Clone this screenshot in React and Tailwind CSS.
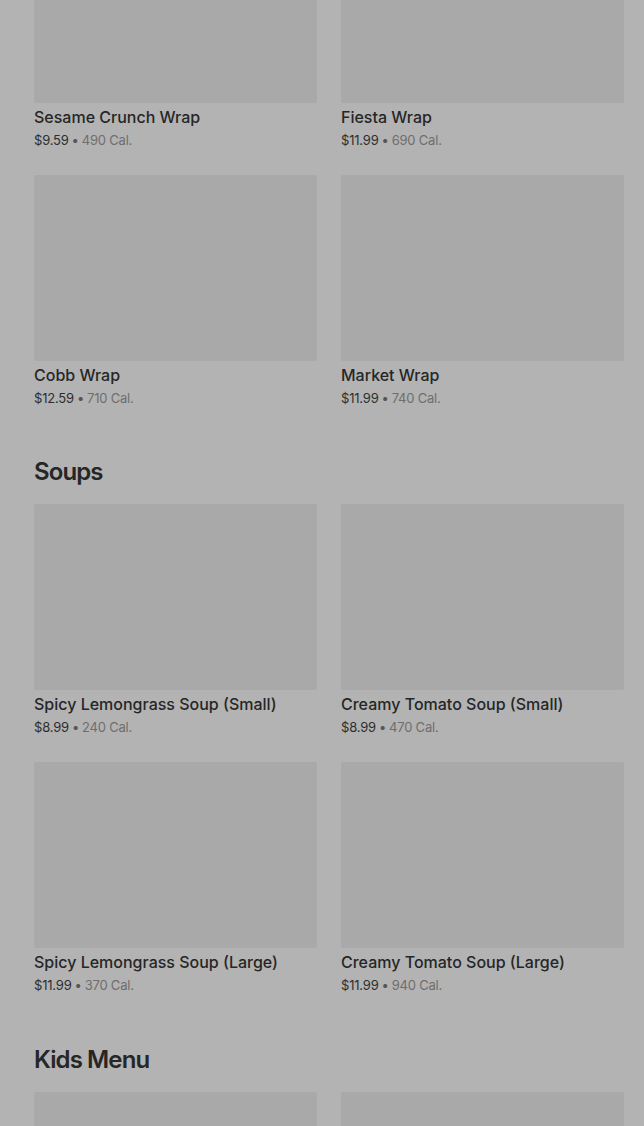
import React from 'react';

const sections = [
  {
    title: null,
    items: [
      { name: 'Sesame Crunch Wrap', price: '$9.59', cal: '490 Cal.' },
      { name: 'Fiesta Wrap', price: '$11.99', cal: '690 Cal.' },
      { name: 'Cobb Wrap', price: '$12.59', cal: '710 Cal.' },
      { name: 'Market Wrap', price: '$11.99', cal: '740 Cal.' },
    ],
  },
  {
    title: 'Soups',
    gap: 'mt-[48px]',
    items: [
      { name: 'Spicy Lemongrass Soup (Small)', price: '$8.99', cal: '240 Cal.' },
      { name: 'Creamy Tomato Soup (Small)', price: '$8.99', cal: '470 Cal.' },
      { name: 'Spicy Lemongrass Soup (Large)', price: '$11.99', cal: '370 Cal.' },
      { name: 'Creamy Tomato Soup (Large)', price: '$11.99', cal: '940 Cal.' },
    ],
  },
  {
    title: 'Kids Menu',
    gap: 'mt-[49px]',
    // below the fold: only the photos peek in
    items: [{ name: 'kids-1' }, { name: 'kids-2' }],
  },
];

const MenuItem = ({ item }) => (
  <div className="flex flex-col">
    <div className="h-[186px] bg-[#a9a9a9] rounded-[2px]" />
    {item.price && (
      <>
        <h3 className="mt-[4px] text-[16px] leading-5 font-medium text-[#262626]">{item.name}</h3>
        <p className="mt-[3px] text-[13px] leading-5 tracking-[-0.2px] text-[#2e2e2e]">
          {item.price}
          <span className="text-[#555] mx-[3px]">•</span>
          <span className="text-[#6e6e6e]">{item.cal}</span>
        </p>
      </>
    )}
  </div>
);

export default function App() {
  return (
    <div className="h-[1126px] overflow-hidden bg-[#b3b3b3]" style={{ fontFamily: 'Inter, "Open Sans", sans-serif' }}>
      <div className="-mt-[83px] pl-[34px] pr-[20px]">
        {sections.map((s, i) => (
          <section key={i} className={s.gap || ''}>
            {s.title && (
              <h2 className="text-[24px] leading-8 font-semibold tracking-[-0.9px] text-[#262626] mb-[16px]">{s.title}</h2>
            )}
            <div className="grid grid-cols-2 gap-x-[24px] gap-y-[25px]">
              {s.items.map((item) => (
                <MenuItem key={item.name} item={item} />
              ))}
            </div>
          </section>
        ))}
      </div>
    </div>
  );
}
